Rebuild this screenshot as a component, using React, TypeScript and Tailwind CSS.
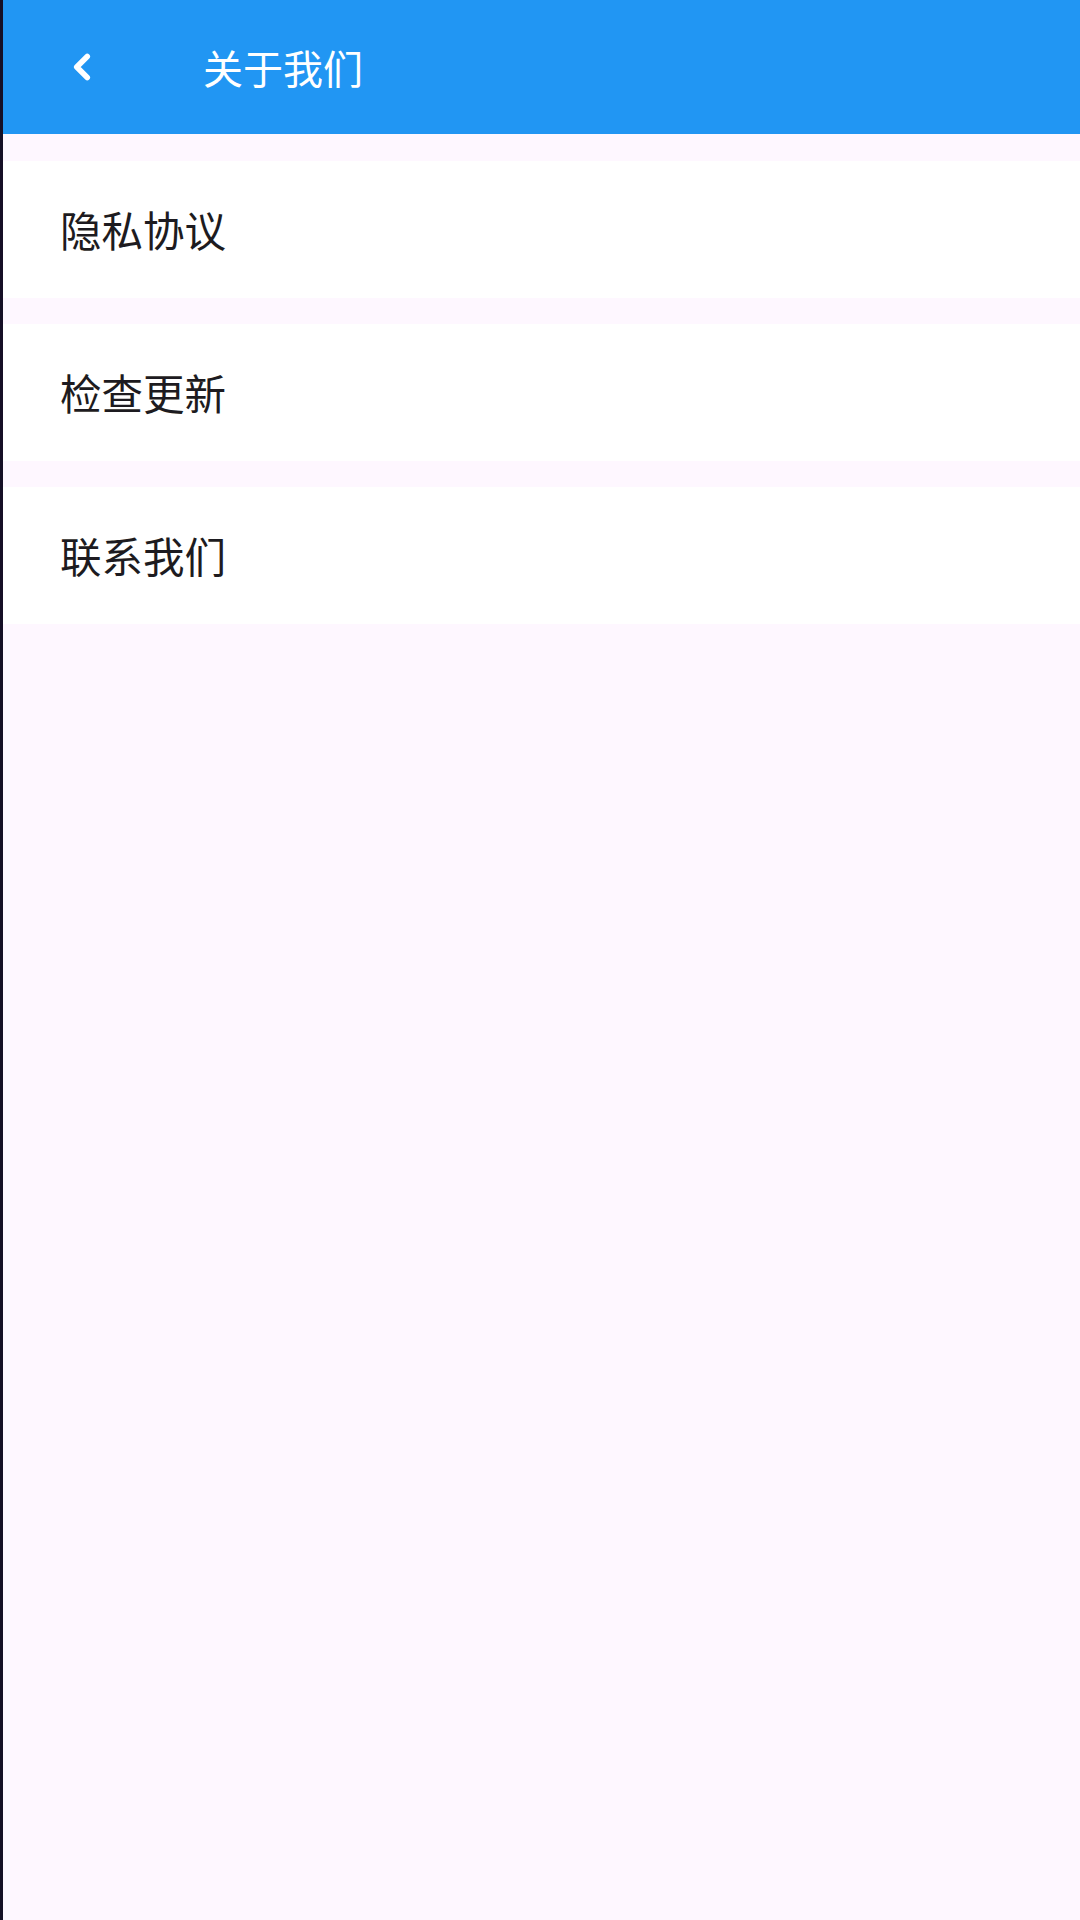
import { ChevronLeft } from "lucide-react";

const items = ["隐私协议", "检查更新", "联系我们"];

const App = () => {
  return (
    <div className="flex w-[1080px] h-[1920px] bg-[#fef7ff] font-['Noto_Sans_CJK_SC',sans-serif]">
      <div className="w-[3px] h-full bg-[#150f26]" />
      <div className="flex-1 flex flex-col">
        <header className="h-[134px] bg-[#2196f3] flex items-center">
          <div className="w-[160px] flex items-center pl-[58px]">
            <ChevronLeft className="w-[42px] h-[42px] text-white" strokeWidth={3.2} />
          </div>
          <h1 className="text-[40px] text-white leading-none pl-[40px]">关于我们</h1>
        </header>

        <div className="flex flex-col gap-[26px] pt-[27px]">
          {items.map((label) => (
            <div key={label} className="h-[137px] bg-white flex items-center pl-[57px]">
              <span className="text-[41.5px] text-[#1d1b20] leading-none">{label}</span>
            </div>
          ))}
        </div>
      </div>
    </div>
  );
};

export default App;
